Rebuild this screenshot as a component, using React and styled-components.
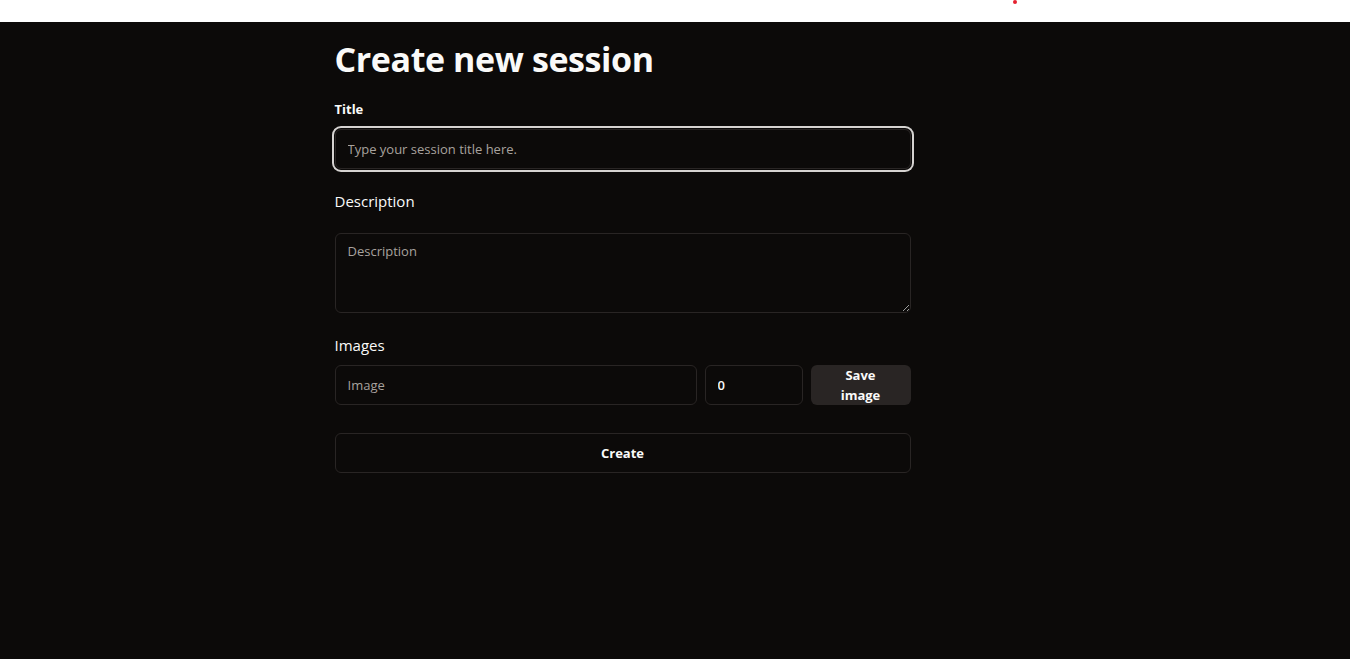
import React from "react";
import styled, { createGlobalStyle } from "styled-components";

const GlobalStyle = createGlobalStyle`
  html, body {
    margin: 0;
    padding: 0;
    background: #0c0a09;
    font-family: "Open Sans", "Noto Sans", sans-serif;
  }
  * {
    box-sizing: border-box;
  }
`;

const TopBar = styled.div`
  height: 22px;
  background: #ffffff;
  position: relative;
`;

const RedDot = styled.span`
  position: absolute;
  left: 1013px;
  top: 0;
  width: 4px;
  height: 4px;
  border-radius: 50%;
  background: #e5202f;
`;

const Page = styled.main`
  min-height: 637px;
  background: #0c0a09;
  color: #fafaf9;
  display: flex;
  justify-content: center;
`;

const Form = styled.form`
  width: 576px;
  margin-left: -105px;
  padding-top: 15px;
  display: flex;
  flex-direction: column;
`;

const Heading = styled.h1`
  margin: 0 0 18px;
  font-size: 34px;
  line-height: 44px;
  font-weight: 700;
  letter-spacing: -0.4px;
`;

const Label = styled.label`
  display: block;
  font-size: ${(p) => (p.$bold ? "13px" : "15px")};
  font-weight: ${(p) => (p.$bold ? 700 : 400)};
  line-height: 20px;
  margin-bottom: ${(p) => p.$gap || 12}px;
`;

const Input = styled.input`
  display: block;
  width: ${(p) => p.$width || "100%"};
  flex-shrink: ${(p) => (p.$width ? 0 : 1)};
  height: 40px;
  padding: 0 12px;
  background: #0c0a09;
  color: #fafaf9;
  border: 1px solid #292524;
  border-radius: 6px;
  font-family: inherit;
  font-size: 13px;
  font-weight: ${(p) => (p.$strong ? 600 : 400)};
  outline: none;
  box-shadow: ${(p) =>
    p.$focused ? "0 0 0 1px #0c0a09, 0 0 0 3px #d6d3d1" : "none"};
  &::placeholder {
    color: #a8a29e;
  }
`;

const TextArea = styled.textarea`
  display: block;
  width: 100%;
  height: 80px;
  padding: 8px 12px;
  background: #0c0a09;
  color: #fafaf9;
  border: 1px solid #292524;
  border-radius: 6px;
  font-family: inherit;
  font-size: 13px;
  outline: none;
  &::placeholder {
    color: #a8a29e;
  }
`;

const Field = styled.div`
  margin-bottom: ${(p) => p.$gap || 0}px;
`;

const ImageRow = styled.div`
  display: flex;
  gap: 8px;
  margin-bottom: 28px;
`;

const SaveButton = styled.button`
  width: 100px;
  height: 40px;
  flex-shrink: 0;
  background: #292524;
  color: #fafaf9;
  border: none;
  border-radius: 6px;
  font-family: inherit;
  font-size: 13px;
  font-weight: 700;
  line-height: 20px;
  padding: 0 16px;
`;

const CreateButton = styled.button`
  width: 100%;
  height: 40px;
  background: #0c0a09;
  color: #fafaf9;
  border: 1px solid #292524;
  border-radius: 6px;
  font-family: inherit;
  font-size: 13px;
  font-weight: 700;
`;

export default function App() {
  return (
    <>
      <GlobalStyle />
      <TopBar>
        <RedDot />
      </TopBar>
      <Page>
        <Form onSubmit={(e) => e.preventDefault()}>
          <Heading>Create new session</Heading>
          <Field $gap={22}>
            <Label $bold $gap={10}>Title</Label>
            <Input $focused placeholder="Type your session title here." />
          </Field>
          <Field $gap={22}>
            <Label $gap={22}>Description</Label>
            <TextArea placeholder="Description" />
          </Field>
          <Field>
            <Label $gap={10}>Images</Label>
            <ImageRow>
              <Input placeholder="Image" />
              <Input $width="98px" $strong defaultValue="0" />
              <SaveButton type="button">Save image</SaveButton>
            </ImageRow>
          </Field>
          <CreateButton type="submit">Create</CreateButton>
        </Form>
      </Page>
    </>
  );
}
